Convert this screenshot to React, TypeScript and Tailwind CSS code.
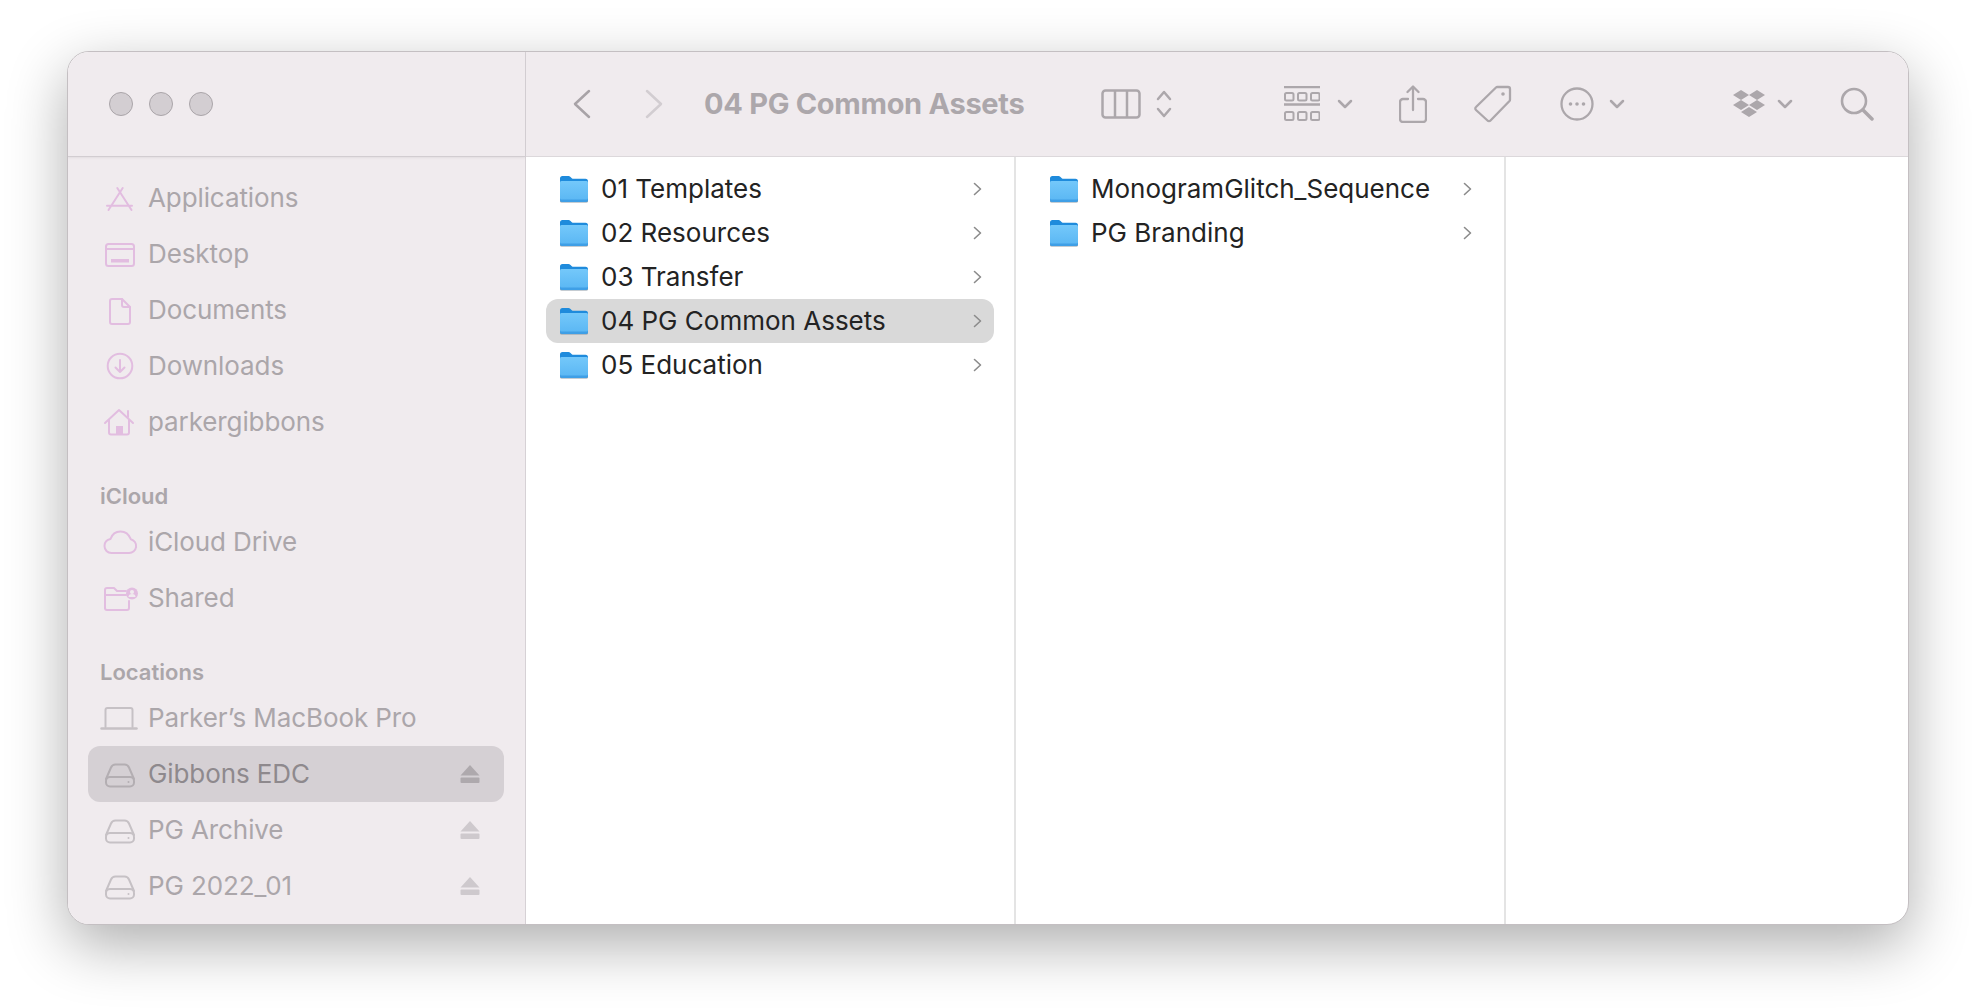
const pink = "#e2bde0";
const gray = "#c6c1c5";

function S({ w = 40, h = 32, children, stroke = pink }: { w?: number; h?: number; children: React.ReactNode; stroke?: string }) {
  return (
    <svg width={w} height={h} viewBox={`0 0 ${w} ${h}`} fill="none" stroke={stroke} strokeWidth={2} strokeLinecap="round" strokeLinejoin="round" className="shrink-0">
      {children}
    </svg>
  );
}

const AppsIcon = () => (
  <S>
    <path d="M17.3 6 31.5 28M22.7 6 8.5 28M7 23.7h25M16 23.7h9" />
    <path d="M20 10.5 24.5 17" strokeWidth={0} />
  </S>
);
const DesktopIcon = () => (
  <S>
    <rect x="6" y="6" width="28" height="22" rx="2.5" />
    <path d="M6 11h28" />
    <rect x="11" y="21" width="18" height="3.5" fill={pink} stroke="none" />
  </S>
);
const DocIcon = () => (
  <S>
    <path d="M12 5h10l8 8v15a2 2 0 0 1-2 2H12a2 2 0 0 1-2-2V7a2 2 0 0 1 2-2z" />
    <path d="M22 5v6a2 2 0 0 0 2 2h6" />
  </S>
);
const DownIcon = () => (
  <S>
    <circle cx="20" cy="16" r="12.3" />
    <path d="M20 10v12M15.5 17.5l4.5 4.5 4.5-4.5" />
  </S>
);
const HomeIcon = () => (
  <S>
    <path d="M5 17 19 4l14 13M28 11V5" />
    <path d="M9 14v12.5a2 2 0 0 0 2 2h16a2 2 0 0 0 2-2V14" />
    <rect x="16" y="20" width="7" height="8.5" fill={pink} stroke="none" />
  </S>
);
const CloudIcon = () => (
  <S>
    <path d="M11.5 27h17.5a7 7 0 0 0 1.8-13.8C29 8.500 25 5.500 20.500 5.500c-5 0-8.500 3-10 7.500C7 13.700 4.500 16.500 4.500 20c0 4 3 7 7 7z" />
  </S>
);
const SharedIcon = () => (
  <S>
    <path d="M5 26V8a2 2 0 0 1 2-2h7l3 3h9M5 13h21" />
    <path d="M5 26a2 2 0 0 0 2 2h20a2 2 0 0 0 2-2v-7" />
    <circle cx="32" cy="11.500" r="6" fill={pink} stroke="none" />
    <circle cx="32" cy="10" r="2" fill="#f0ebee" stroke="none" />
    <path d="M28.500 15a3.500 3 0 0 1 7 0z" fill="#f0ebee" stroke="none" />
  </S>
);
const LaptopIcon = () => (
  <S stroke={gray}>
    <path d="M5.500 25V8a2 2 0 0 1 2-2h23a2 2 0 0 1 2 2v17" />
    <path d="M1.500 26.500h35" strokeWidth={2.500} />
  </S>
);
const DriveIcon = ({ c = gray }: { c?: string }) => (
  <S stroke={c}>
    <path d="M6 21 11 9.500Q12.300 6.500 15.500 6.500h9Q27.700 6.500 29 9.500L34 21" />
    <rect x="6" y="19" width="28" height="9.500" rx="4" />
    <circle cx="28.500" cy="24" r="1" fill={c} stroke="none" />
  </S>
);
const Eject = ({ c }: { c: string }) => (
  <svg width="20" height="20" viewBox="0 0 20 20" className="shrink-0">
    <path d="M10 1 19.500 11.500H.5z" fill={c} />
    <rect x="0.500" y="13.500" width="19" height="5.500" rx="1" fill={c} />
  </svg>
);

function Row({ icon, label, active, eject }: { icon: React.ReactNode; label: string; active?: boolean; eject?: boolean }) {
  return (
    <div className={`ml-[20px] w-[416px] h-[56px] flex items-center pl-[12px] pr-[24px] rounded-[12px] ${active ? "bg-[#d5d0d4] text-[#8e898d]" : "text-[#aba6aa]"}`}>
      <div className="w-[40px] flex justify-center shrink-0">{icon}</div>
      <span className="ml-[8px] flex-1 text-[26px] leading-[32px] tracking-[-0.1px] whitespace-nowrap">{label}</span>
      {eject && <Eject c={active ? "#aea9ad" : "#cec9cd"} />}
    </div>
  );
}

function Head({ label }: { label: string }) {
  return (
    <div className="h-[64px] flex items-end pl-[32px] pb-[8px]">
      <span className="text-[22px] leading-[20px] font-semibold text-[#aba6aa]">{label}</span>
    </div>
  );
}

const Folder = () => (
  <svg width="28" height="28" viewBox="0 0 28 28" className="shrink-0">
    <defs>
      <linearGradient id="fbody" x1="0" y1="0" x2="0" y2="1">
        <stop offset="0" stopColor="#74c8fa" />
        <stop offset="1" stopColor="#5cb8f4" />
      </linearGradient>
    </defs>
    <path d="M0 3.500A2.500 2.500 0 0 1 2.500 1H8.500C10 1 10.500 2 11.500 3L12.500 3.800H25.500A2.500 2.500 0 0 1 28 6.300V12H0z" fill="#1f8bdc" />
    <rect x="0" y="24" width="28" height="3.500" rx="1.500" fill="#8c9aa6" />
    <rect x="0" y="6" width="28" height="21" rx="1.800" fill="#3f9fe6" />
    <rect x="0" y="6" width="28" height="18.500" rx="1.500" fill="url(#fbody)" />
  </svg>
);

const Chev = () => (
  <svg width="9" height="14" viewBox="0 0 9 14" fill="none" stroke="#8b8b8b" strokeWidth="1.600" strokeLinecap="round" strokeLinejoin="round" className="shrink-0">
    <path d="M1.500 1.500 7.500 7l-6 5.500" />
  </svg>
);

function FRow({ label, active }: { label: string; active?: boolean }) {
  return (
    <div className={`ml-[20px] w-[448px] h-[44px] flex items-center pl-[14px] pr-[12px] rounded-[12px] ${active ? "bg-[#d9d9d9]" : ""}`}>
      <Folder />
      <span className="ml-[13px] flex-1 text-[26px] leading-[32px] text-[#232323] whitespace-nowrap">{label}</span>
      <Chev />
    </div>
  );
}

const T = "#aca7ab";
const Down = ({ c = T }: { c?: string }) => (
  <svg width="16" height="10" viewBox="0 0 16 10" fill="none" stroke={c} strokeWidth="2.500" strokeLinecap="round" strokeLinejoin="round" className="shrink-0">
    <path d="M2 2l6 6 6-6" />
  </svg>
);

function Toolbar() {
  return (
    <div className="h-[105px] flex items-center bg-[#f0ebee] border-b border-[#dcd8db] pl-[47px]">
      <svg width="18" height="30" viewBox="0 0 18 30" fill="none" stroke="#a8a3a7" strokeWidth="2.500" strokeLinecap="round" strokeLinejoin="round" className="shrink-0">
        <path d="M16 2 2 15l14 13" />
      </svg>
      <svg width="18" height="30" viewBox="0 0 18 30" fill="none" stroke="#d2cdd1" strokeWidth="2.500" strokeLinecap="round" strokeLinejoin="round" className="shrink-0 ml-[54px]">
        <path d="M2 2l14 13L2 28" />
      </svg>
      <span className="ml-[41px] w-[328px] text-[29px] leading-[36px] font-bold text-[#aca7ab] whitespace-nowrap tracking-[-0.3px]">04 PG Common Assets</span>
      <svg width="40" height="30" viewBox="0 0 40 30" fill="none" stroke={T} strokeWidth="2.500" className="shrink-0 ml-[69px]">
        <rect x="1.500" y="1.500" width="37" height="27" rx="3" />
        <path d="M14 2v26M26 2v26" />
      </svg>
      <svg width="16" height="28" viewBox="0 0 16 28" fill="none" stroke={T} strokeWidth="2.500" strokeLinecap="round" strokeLinejoin="round" className="shrink-0 ml-[15px]">
        <path d="M2 9l6-7 6 7M2 19l6 7 6-7" />
      </svg>
      <svg width="36" height="36" viewBox="0 0 36 36" fill="none" stroke={T} strokeWidth="2" className="shrink-0 ml-[112px]">
        <path d="M0 1h36M0 18.500h36" strokeWidth="2.500" />
        <rect x="1" y="7" width="8.500" height="7.500" rx="1.500" />
        <rect x="14" y="7" width="8.500" height="7.500" rx="1.500" />
        <rect x="27" y="7" width="8.500" height="7.500" rx="1.500" />
        <rect x="1" y="26" width="8.500" height="8" rx="1.500" />
        <rect x="14" y="26" width="8.500" height="8" rx="1.500" />
        <rect x="27" y="26" width="8.500" height="8" rx="1.500" />
      </svg>
      <div className="ml-[17px]"><Down /></div>
      <svg width="28" height="38" viewBox="0 0 28 38" fill="none" stroke={T} strokeWidth="2.300" strokeLinecap="round" strokeLinejoin="round" className="shrink-0 ml-[46px]">
        <path d="M9 14H4a3 3 0 0 0-3 3v17a3 3 0 0 0 3 3h20a3 3 0 0 0 3-3V17a3 3 0 0 0-3-3h-5" />
        <path d="M14 25V2M8.500 7 14 1.500 19.500 7" />
      </svg>
      <svg width="38" height="38" viewBox="0 0 38 38" fill="none" stroke={T} strokeWidth="2.300" strokeLinejoin="round" className="shrink-0 ml-[47px]">
        <path d="M2 22 22 2.500a2 2 0 0 1 1.500-.5H34a2 2 0 0 1 2 2v10.500a2 2 0 0 1-.5 1.500L16.500 35.500a2 2 0 0 1-3 0L2 25a2 2 0 0 1 0-3z" />
        <circle cx="29" cy="9" r="1.800" fill={T} stroke="none" />
      </svg>
      <svg width="34" height="34" viewBox="0 0 34 34" fill="none" stroke={T} strokeWidth="2.300" className="shrink-0 ml-[48px]">
        <circle cx="17" cy="17" r="15.500" />
        <circle cx="10.500" cy="17" r="1.800" fill={T} stroke="none" />
        <circle cx="17" cy="17" r="1.800" fill={T} stroke="none" />
        <circle cx="23.500" cy="17" r="1.800" fill={T} stroke="none" />
      </svg>
      <div className="ml-[15px]"><Down /></div>
      <svg width="32" height="28" viewBox="0 0 32 28" fill={T} className="shrink-0 ml-[108px]">
        <path d="M8 0l8 5-8 5-8-5zM24 0l8 5-8 5-8-5zM8 10l8 5-8 5-8-5zM24 10l8 5-8 5-8-5zM16 17l8 5-8 5-8-5z" />
      </svg>
      <div className="ml-[12px]"><Down /></div>
      <svg width="34" height="34" viewBox="0 0 34 34" fill="none" stroke={T} strokeWidth="2.600" strokeLinecap="round" className="shrink-0 ml-[47px]">
        <circle cx="14" cy="14" r="12" />
        <path d="M23 23l9 9" strokeWidth="3.500" />
      </svg>
    </div>
  );
}

export default function App() {
  return (
    <div className="w-[1976px] h-[1008px] bg-white pl-[67px] pt-[51px] overflow-hidden font-['Inter',sans-serif]">
      <div className="box-border w-[1842px] h-[874px] flex rounded-[22px] border border-[#c4bfc2] overflow-hidden bg-white shadow-[0_20px_60px_rgba(0,0,0,0.32)]">
        <div className="w-[458px] shrink-0 bg-[#f0ebee] border-r border-[#d6d1d5] flex flex-col">
          <div className="h-[105px] shrink-0 flex items-center gap-[16px] pl-[41px] border-b border-[#d2cdd1] shadow-[0_1px_2px_rgba(0,0,0,0.06)]">
            <div className="w-[24px] h-[24px] rounded-full bg-[#d3ced2] border border-[#aaa5a9]" />
            <div className="w-[24px] h-[24px] rounded-full bg-[#d3ced2] border border-[#aaa5a9]" />
            <div className="w-[24px] h-[24px] rounded-full bg-[#d3ced2] border border-[#aaa5a9]" />
          </div>
          <div className="pt-[13px]">
            <Row icon={<AppsIcon />} label="Applications" />
            <Row icon={<DesktopIcon />} label="Desktop" />
            <Row icon={<DocIcon />} label="Documents" />
            <Row icon={<DownIcon />} label="Downloads" />
            <Row icon={<HomeIcon />} label="parkergibbons" />
            <Head label="iCloud" />
            <Row icon={<CloudIcon />} label="iCloud Drive" />
            <Row icon={<SharedIcon />} label="Shared" />
            <Head label="Locations" />
            <Row icon={<LaptopIcon />} label="Parker’s MacBook Pro" />
            <Row icon={<DriveIcon c="#b3aeb2" />} label="Gibbons EDC" active eject />
            <Row icon={<DriveIcon />} label="PG Archive" eject />
            <Row icon={<DriveIcon />} label="PG 2022_01" eject />
          </div>
        </div>
        <div className="flex-1 flex flex-col min-w-0">
          <Toolbar />
          <div className="flex-1 flex">
            <div className="w-[490px] border-r-2 border-[#e4e4e4] pt-[10px]">
              <FRow label="01 Templates" />
              <FRow label="02 Resources" />
              <FRow label="03 Transfer" />
              <FRow label="04 PG Common Assets" active />
              <FRow label="05 Education" />
            </div>
            <div className="w-[490px] border-r-2 border-[#e4e4e4] pt-[10px]">
              <FRow label="MonogramGlitch_Sequence" />
              <FRow label="PG Branding" />
            </div>
            <div className="flex-1" />
          </div>
        </div>
      </div>
    </div>
  );
}
